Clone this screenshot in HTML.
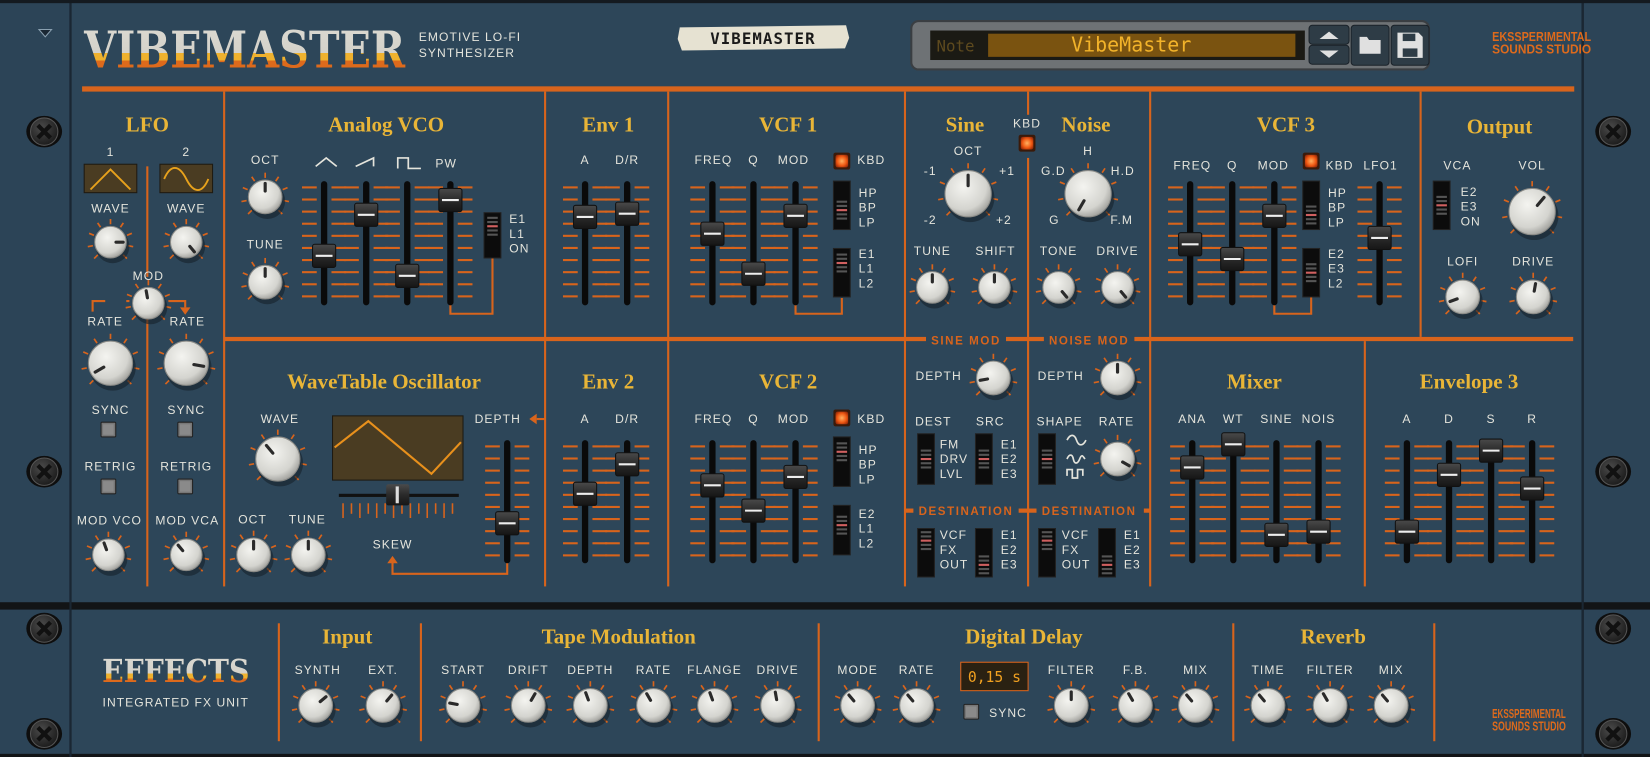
<!DOCTYPE html>
<html><head><meta charset="utf-8">
<style>
html,body{margin:0;padding:0;background:#111;width:1650px;height:757px;overflow:hidden}
#w{position:absolute;left:0;top:0;width:1568px;height:719px;transform:scale(1.05230,1.05285);transform-origin:0 0}
svg{display:block}
.t{font-family:"Liberation Serif",serif;font-weight:bold;font-size:20px;fill:#e9b537;text-anchor:middle}
.l{font-family:"Liberation Sans",sans-serif;font-size:11.5px;fill:#e4e4dc;text-anchor:middle;letter-spacing:1px}
.s{font-family:"Liberation Sans",sans-serif;font-size:11.5px;fill:#e4e4dc;letter-spacing:1px}
.o{font-family:"Liberation Sans",sans-serif;font-size:11px;fill:#d8641c;text-anchor:middle;letter-spacing:1.5px;font-weight:bold}
</style></head><body>
<div id="w">
<svg id="sv" width="1568" height="719" viewBox="0 0 1568 719" xmlns="http://www.w3.org/2000/svg">
<defs>
<radialGradient id="kg" cx="40%" cy="35%" r="70%"><stop offset="0" stop-color="#f4f4f0"/><stop offset="0.7" stop-color="#d4d4cf"/><stop offset="1" stop-color="#9a9a96"/></radialGradient>
<linearGradient id="hg" x1="0" y1="0" x2="0" y2="1"><stop offset="0" stop-color="#4a4a4a"/><stop offset="0.5" stop-color="#2a2a2a"/><stop offset="1" stop-color="#161616"/></linearGradient>
<linearGradient id="logo" x1="0" y1="0" x2="0" y2="1"><stop offset="0" stop-color="#dcdad2"/><stop offset="0.55" stop-color="#d4d2ca"/><stop offset="0.55" stop-color="#efb22e"/><stop offset="0.68" stop-color="#efb22e"/><stop offset="0.68" stop-color="#dd6a1c"/><stop offset="1" stop-color="#dd6a1c"/></linearGradient>
<radialGradient id="led" cx="50%" cy="50%" r="60%"><stop offset="0" stop-color="#ffb060"/><stop offset="0.6" stop-color="#f05a14"/><stop offset="1" stop-color="#9a2a08"/></radialGradient>
<radialGradient id="sc" cx="40%" cy="35%" r="70%"><stop offset="0" stop-color="#4a4a4a"/><stop offset="1" stop-color="#1a1a1a"/></radialGradient>
</defs>
<rect x="0" y="0" width="1568" height="719" fill="#121416"/>
<rect x="0" y="0" width="66" height="572" fill="#2c4457"/>
<rect x="1505" y="0" width="63" height="572" fill="#2c4457"/>
<rect x="68" y="0" width="1435" height="572" fill="#2d4659"/>
<rect x="0" y="579" width="66" height="137" fill="#2c4457"/>
<rect x="1505" y="579" width="63" height="137" fill="#2c4457"/>
<rect x="68" y="579" width="1435" height="137" fill="#2d4659"/>
<rect x="66" y="0" width="2" height="719" fill="#1a2733"/>
<rect x="1503" y="0" width="2" height="719" fill="#1a2733"/>
<rect x="0" y="0" width="1568" height="3" fill="#141a20"/>
<polygon points="37,28 49,28 43,35" fill="#1a2733" stroke="#8aa0b0" stroke-width="1"/>

<text x="80" y="64" font-family="DejaVu Serif,serif" font-weight="bold" font-size="48" fill="url(#logo)" textLength="305" lengthAdjust="spacingAndGlyphs">VIBEMASTER</text>
<text class="s" x="398" y="39">EMOTIVE LO-FI</text>
<text class="s" x="398" y="54">SYNTHESIZER</text>
<polygon points="646,26 804,24 807,36 803,46 648,48 644,37" fill="#e6e2d2"/>
<text x="725" y="42" font-family="DejaVu Sans Mono,monospace" font-weight="bold" font-size="15" fill="#1a1a1a" text-anchor="middle" letter-spacing="1">VIBEMASTER</text>
<rect x="866" y="20" width="492" height="46" rx="7" fill="#6e7275" stroke="#3a3e42" stroke-width="2"/>
<rect x="884" y="29" width="356" height="28" fill="#1b1a14"/>
<text x="890" y="49" font-family="DejaVu Sans Mono,monospace" font-size="15" fill="#5e4a1e">Note</text>
<rect x="939" y="32" width="292" height="22" fill="#7a5310"/>
<text x="1075" y="49" font-family="DejaVu Sans Mono,monospace" font-size="19" fill="#f2b32a" text-anchor="middle">VibeMaster</text>
<rect x="1244" y="24" width="38" height="18" rx="3" fill="#2e3c46" stroke="#1a2229"/>
<rect x="1244" y="43" width="38" height="18" rx="3" fill="#2e3c46" stroke="#1a2229"/>
<polygon points="1254,37 1263,30 1272,37" fill="#e0e0e0"/>
<polygon points="1254,48 1263,55 1272,48" fill="#e0e0e0"/>
<rect x="1284" y="24" width="36" height="38" rx="3" fill="#2e3c46" stroke="#1a2229"/>
<path d="M1292 35 h7 l2 3 h11 v13 h-20z" fill="#e0e0e0"/>
<rect x="1322" y="24" width="36" height="38" rx="3" fill="#2e3c46" stroke="#1a2229"/>
<path d="M1328 31 h20 l4 4 v20 h-24z" fill="#e0e0e0"/><rect x="1333" y="32" width="12" height="7" fill="#2e3c46"/><rect x="1333" y="46" width="14" height="8" fill="#2e3c46"/>
<text x="1418" y="39" font-family="Liberation Sans,sans-serif" font-weight="bold" font-size="12" fill="#dd6a1c" textLength="94" lengthAdjust="spacingAndGlyphs">EKSSPERIMENTAL</text>
<text x="1418" y="51" font-family="Liberation Sans,sans-serif" font-weight="bold" font-size="12" fill="#dd6a1c" textLength="94" lengthAdjust="spacingAndGlyphs">SOUNDS STUDIO</text>

<g fill="#d8641c">
<rect x="78" y="82" width="1418" height="5"/>
<rect x="213" y="320" width="1282" height="4"/>
<rect x="212" y="87" width="2" height="470"/>
<rect x="139" y="158" width="2" height="105"/>
<rect x="139" y="300" width="2" height="257"/>
<rect x="517" y="87" width="2" height="470"/>
<rect x="634" y="87" width="2" height="470"/>
<rect x="859" y="87" width="2" height="470"/>
<rect x="976" y="87" width="2" height="22"/><rect x="976" y="150" width="2" height="407"/>
<rect x="1092" y="87" width="2" height="470"/>
<rect x="1349" y="87" width="2" height="233"/>
<rect x="1296" y="324" width="2" height="233"/>
<rect x="264" y="592" width="2" height="112"/>
<rect x="399" y="592" width="2" height="112"/>
<rect x="777" y="592" width="2" height="112"/>
<rect x="1171" y="592" width="2" height="112"/>
<rect x="1362" y="592" width="2" height="112"/>
<rect x="860" y="483" width="233" height="4"/>
</g>
<rect x="880" y="316" width="76" height="12" fill="#2d4659"/>
<rect x="992" y="316" width="86" height="12" fill="#2d4659"/>
<rect x="868" y="479" width="100" height="12" fill="#2d4659"/>
<rect x="985" y="479" width="102" height="12" fill="#2d4659"/>
<text class="o" x="918" y="327">SINE MOD</text>
<text class="o" x="1035" y="327">NOISE MOD</text>
<text class="o" x="918" y="489">DESTINATION</text>
<text class="o" x="1035" y="489">DESTINATION</text>

<g fill="none" stroke="#d8641c" stroke-width="2">
<path d="M428 285 V298 H468 V245"/>
<path d="M756 285 V298 H800 V283"/>
<path d="M1211 285 V298 H1246 V280"/>
<path d="M100 286 H88 V296 M120 286 H123"/>
<path d="M160 286 H176 V292"/>
<path d="M482 528 V545 H373 V533"/>
<path d="M518 398 H510"/>
</g>
<polygon points="171,292 181,292 176,299" fill="#d8641c"/>
<polygon points="368,535 378,535 373,528" fill="#d8641c"/>
<polygon points="510,393 510,403 503,398" fill="#d8641c"/>

<text class="t" x="140" y="125">LFO</text>
<text class="t" x="367" y="125">Analog VCO</text>
<text class="t" x="578" y="125">Env 1</text>
<text class="t" x="749" y="125">VCF 1</text>
<text class="t" x="917" y="125">Sine</text>
<text class="t" x="1032" y="125">Noise</text>
<text class="t" x="1222" y="125">VCF 3</text>
<text class="t" x="1425" y="127">Output</text>
<text class="t" x="365" y="369">WaveTable Oscillator</text>
<text class="t" x="578" y="369">Env 2</text>
<text class="t" x="749" y="369">VCF 2</text>
<text class="t" x="1192" y="369">Mixer</text>
<text class="t" x="1396" y="369">Envelope 3</text>
<text class="t" x="330" y="611">Input</text>
<text class="t" x="588" y="611">Tape Modulation</text>
<text class="t" x="973" y="611">Digital Delay</text>
<text class="t" x="1267" y="611">Reverb</text>

<g>
<text class="l" x="105" y="148">1</text><text class="l" x="177" y="148">2</text>
<text class="l" x="105" y="202">WAVE</text><text class="l" x="177" y="202">WAVE</text>
<text class="l" x="141" y="266">MOD</text>
<text class="l" x="100" y="309">RATE</text><text class="l" x="178" y="309">RATE</text>
<text class="l" x="105" y="393">SYNC</text><text class="l" x="177" y="393">SYNC</text>
<text class="l" x="105" y="447">RETRIG</text><text class="l" x="177" y="447">RETRIG</text>
<text class="l" x="104" y="498">MOD VCO</text><text class="l" x="178" y="498">MOD VCA</text>
<text class="l" x="252" y="156">OCT</text><text class="l" x="252" y="236">TUNE</text>
<text class="l" x="424" y="159">PW</text>
<text class="s" x="484" y="212">E1</text><text class="s" x="484" y="226">L1</text><text class="s" x="484" y="240">ON</text>
<text class="l" x="556" y="156">A</text><text class="l" x="596" y="156">D/R</text>
<text class="l" x="678" y="156">FREQ</text><text class="l" x="716" y="156">Q</text><text class="l" x="754" y="156">MOD</text><text class="l" x="828" y="156">KBD</text>
<text class="s" x="816" y="187">HP</text><text class="s" x="816" y="201">BP</text><text class="s" x="816" y="215">LP</text>
<text class="s" x="816" y="245">E1</text><text class="s" x="816" y="259">L1</text><text class="s" x="816" y="273">L2</text>
<text class="l" x="976" y="121" font-size="10">KBD</text>
<text class="l" x="920" y="147">OCT</text>
<text class="l" x="884" y="166">-1</text><text class="l" x="957" y="166">+1</text><text class="l" x="884" y="213">-2</text><text class="l" x="954" y="213">+2</text>
<text class="l" x="886" y="242">TUNE</text><text class="l" x="946" y="242">SHIFT</text>
<text class="l" x="1034" y="147">H</text>
<text class="l" x="1001" y="166">G.D</text><text class="l" x="1067" y="166">H.D</text><text class="l" x="1002" y="213">G</text><text class="l" x="1066" y="213">F.M</text>
<text class="l" x="1006" y="242">TONE</text><text class="l" x="1062" y="242">DRIVE</text>
<text class="l" x="1133" y="161">FREQ</text><text class="l" x="1171" y="161">Q</text><text class="l" x="1210" y="161">MOD</text><text class="l" x="1273" y="161">KBD</text><text class="l" x="1312" y="161">LFO1</text>
<text class="s" x="1262" y="187">HP</text><text class="s" x="1262" y="201">BP</text><text class="s" x="1262" y="215">LP</text>
<text class="s" x="1262" y="245">E2</text><text class="s" x="1262" y="259">E3</text><text class="s" x="1262" y="273">L2</text>
<text class="l" x="1385" y="161">VCA</text><text class="l" x="1456" y="161">VOL</text>
<text class="s" x="1388" y="186">E2</text><text class="s" x="1388" y="200">E3</text><text class="s" x="1388" y="214">ON</text>
<text class="l" x="1390" y="252">LOFI</text><text class="l" x="1457" y="252">DRIVE</text>
<text class="l" x="266" y="402">WAVE</text><text class="l" x="473" y="402">DEPTH</text>
<text class="l" x="373" y="521">SKEW</text>
<text class="l" x="240" y="497">OCT</text><text class="l" x="292" y="497">TUNE</text>
<text class="l" x="556" y="402">A</text><text class="l" x="596" y="402">D/R</text>
<text class="l" x="678" y="402">FREQ</text><text class="l" x="716" y="402">Q</text><text class="l" x="754" y="402">MOD</text><text class="l" x="828" y="402">KBD</text>
<text class="s" x="816" y="431">HP</text><text class="s" x="816" y="445">BP</text><text class="s" x="816" y="459">LP</text>
<text class="s" x="816" y="492">E2</text><text class="s" x="816" y="506">L1</text><text class="s" x="816" y="520">L2</text>
<text class="l" x="892" y="361">DEPTH</text><text class="l" x="1008" y="361">DEPTH</text>
<text class="l" x="887" y="404">DEST</text><text class="l" x="941" y="404">SRC</text>
<text class="s" x="893" y="426">FM</text><text class="s" x="893" y="440">DRV</text><text class="s" x="893" y="454">LVL</text>
<text class="s" x="951" y="426">E1</text><text class="s" x="951" y="440">E2</text><text class="s" x="951" y="454">E3</text>
<text class="l" x="1007" y="404">SHAPE</text><text class="l" x="1061" y="404">RATE</text>
<text class="s" x="893" y="512">VCF</text><text class="s" x="893" y="526">FX</text><text class="s" x="893" y="540">OUT</text>
<text class="s" x="951" y="512">E1</text><text class="s" x="951" y="526">E2</text><text class="s" x="951" y="540">E3</text>
<text class="s" x="1009" y="512">VCF</text><text class="s" x="1009" y="526">FX</text><text class="s" x="1009" y="540">OUT</text>
<text class="s" x="1068" y="512">E1</text><text class="s" x="1068" y="526">E2</text><text class="s" x="1068" y="540">E3</text>
<text class="l" x="1133" y="402">ANA</text><text class="l" x="1172" y="402">WT</text><text class="l" x="1213" y="402">SINE</text><text class="l" x="1253" y="402">NOIS</text>
<text class="l" x="1337" y="402">A</text><text class="l" x="1377" y="402">D</text><text class="l" x="1417" y="402">S</text><text class="l" x="1456" y="402">R</text>
<text class="l" x="302" y="640">SYNTH</text><text class="l" x="364" y="640">EXT.</text>
<text class="l" x="440" y="640">START</text><text class="l" x="502" y="640">DRIFT</text><text class="l" x="561" y="640">DEPTH</text><text class="l" x="621" y="640">RATE</text><text class="l" x="679" y="640">FLANGE</text><text class="l" x="739" y="640">DRIVE</text>
<text class="l" x="815" y="640">MODE</text><text class="l" x="871" y="640">RATE</text>
<text class="l" x="1018" y="640">FILTER</text><text class="l" x="1079" y="640">F.B.</text><text class="l" x="1136" y="640">MIX</text>
<text class="l" x="1205" y="640">TIME</text><text class="l" x="1264" y="640">FILTER</text><text class="l" x="1322" y="640">MIX</text>
<text class="s" x="940" y="681">SYNC</text>
<text class="l" x="167" y="671" font-size="10.5" letter-spacing="2">INTEGRATED FX UNIT</text>
</g>
<text x="97" y="648" font-family="DejaVu Serif,serif" font-weight="bold" font-size="30" fill="url(#logo)" textLength="140" lengthAdjust="spacingAndGlyphs">EFFECTS</text>
<text x="1418" y="682" font-family="Liberation Sans,sans-serif" font-weight="bold" font-size="12" fill="#dd6a1c" textLength="70" lengthAdjust="spacingAndGlyphs">EKSSPERIMENTAL</text>
<text x="1418" y="694" font-family="Liberation Sans,sans-serif" font-weight="bold" font-size="12" fill="#dd6a1c" textLength="70" lengthAdjust="spacingAndGlyphs">SOUNDS STUDIO</text>

<rect x="80" y="156" width="50" height="27" fill="#4a3c22" stroke="#1e1a12"/>
<polyline points="86,180 105,161 124,180" fill="none" stroke="#e8a21c" stroke-width="1.8"/>
<rect x="152" y="156" width="50" height="27" fill="#4a3c22" stroke="#1e1a12"/>
<path d="M156 170 C162 156,170 156,177 170 S192 184,198 170" fill="none" stroke="#e8a21c" stroke-width="1.8"/>
<g fill="none" stroke="#e4e4dc" stroke-width="1.6">
<path d="M300 158 L310 150 L320 158"/><path d="M338 158 L355 150 V158"/><path d="M378 160 V150 H388 V160 H400"/>
<path d="M1014 418 c3 -6 7 -6 9 0 s6 6 9 0"/><path d="M1014 436 c2 -5 5 -5 6 0 s4 5 6 0 s3 -3 5 0"/><path d="M1014 452 v-6 h5 v8 h5 v-8 h5 v6"/>
</g>
<rect x="316" y="395" width="124" height="61" fill="#4a3c22" stroke="#1e1a12"/>
<polyline points="318,425 350,400 410,450 438,420" fill="none" stroke="#e8901c" stroke-width="2"/>
<rect x="322" y="469" width="114" height="3" fill="#111"/>
<g stroke="#d8641c" stroke-width="1.5" id="skt"></g>
<rect x="367" y="460" width="22" height="20" rx="2" fill="url(#hg)"/><rect x="376" y="462" width="3" height="16" fill="#ddd"/>
<rect x="913" y="629" width="64" height="27" fill="#2a2112" stroke="#d8641c" stroke-width="1"/>
<text x="945" y="648" font-family="DejaVu Sans Mono,monospace" font-size="14" fill="#f0a020" text-anchor="middle">0,15 s</text>
<g id="dyn"></g>
</svg>
</div>
<script>
var g=document.getElementById('dyn'),h='';
function knob(x,y,r,a){
 for(var i=0;i<9;i++){var t=(-135+i*33.75)*Math.PI/180;h+='<line x1="'+(x+Math.sin(t)*(r+2))+'" y1="'+(y-Math.cos(t)*(r+2))+'" x2="'+(x+Math.sin(t)*(r+7))+'" y2="'+(y-Math.cos(t)*(r+7))+'" stroke="#d8641c" stroke-width="1.6"/>';}
 h+='<circle cx="'+(x+2)+'" cy="'+(y+4)+'" r="'+(r+1)+'" fill="#16222c" opacity="0.6"/>';
 h+='<circle cx="'+x+'" cy="'+y+'" r="'+r+'" fill="url(#kg)" stroke="#8a8a86" stroke-width="1"/>';
 var t=a*Math.PI/180;h+='<line x1="'+(x+Math.sin(t)*r*0.35)+'" y1="'+(y-Math.cos(t)*r*0.35)+'" x2="'+(x+Math.sin(t)*r*0.8)+'" y2="'+(y-Math.cos(t)*r*0.8)+'" stroke="#2a2a2a" stroke-width="3" stroke-linecap="round"/>';
}
function fad(x,y1,y2,hy){
 for(var y=y1+6;y<y2-4;y+=11.5){h+='<line x1="'+(x-21)+'" y1="'+y+'" x2="'+(x-7)+'" y2="'+y+'" stroke="#d8641c" stroke-width="2"/><line x1="'+(x+7)+'" y1="'+y+'" x2="'+(x+21)+'" y2="'+y+'" stroke="#d8641c" stroke-width="2"/>';}
 h+='<rect x="'+(x-3)+'" y="'+y1+'" width="6" height="'+(y2-y1)+'" rx="3" fill="#0a0a0a"/>';
 h+='<rect x="'+(x-11)+'" y="'+(hy-11)+'" width="22" height="22" rx="2" fill="url(#hg)" stroke="#111"/>';
 h+='<line x1="'+(x-8)+'" y1="'+hy+'" x2="'+(x+8)+'" y2="'+hy+'" stroke="#eee" stroke-width="2"/>';
}
function sw(x,y1,y2,p){
 h+='<rect x="'+(x-8)+'" y="'+y1+'" width="16" height="'+(y2-y1)+'" fill="#0c0c0c" stroke="#222"/>';
 var c=y1+(y2-y1)*p;
 for(var i=-2;i<=2;i++){h+='<rect x="'+(x-5)+'" y="'+(c+i*4-1)+'" width="10" height="2" fill="'+(i==0?'#d06060':'#555')+'"/>';}
}
function led(x,y){h+='<rect x="'+(x-8)+'" y="'+(y-8)+'" width="16" height="16" rx="2" fill="#3a1a0a"/><rect x="'+(x-6)+'" y="'+(y-6)+'" width="12" height="12" rx="2" fill="url(#led)"/>';}
function btn(x,y){h+='<rect x="'+(x-7)+'" y="'+(y-7)+'" width="14" height="14" rx="1" fill="#777" stroke="#222"/><rect x="'+(x-5)+'" y="'+(y-5)+'" width="10" height="10" fill="#8a8a8a"/>';}
function screw(x,y){h+='<ellipse cx="'+x+'" cy="'+y+'" rx="17" ry="15" fill="#0e0e0e"/><circle cx="'+x+'" cy="'+y+'" r="13" fill="url(#sc)" stroke="#555"/><path d="M'+(x-6)+' '+(y-6)+' L'+(x+6)+' '+(y+6)+' M'+(x+6)+' '+(y-6)+' L'+(x-6)+' '+(y+6)+'" stroke="#111" stroke-width="4"/>';}
[[42,125],[42,448],[42,597],[42,697],[1533,125],[1533,448],[1533,597],[1533,697]].forEach(function(p){screw(p[0],p[1]);});
knob(105,230,15,90);knob(177,230,15,140);knob(141,288,15,-10);
knob(105,345,21,-120);knob(177,345,21,100);
btn(103,408);btn(176,408);btn(103,462);btn(176,462);
knob(103,527,15,-20);knob(177,527,15,-40);
knob(252,187,16,0);knob(252,268,16,0);
fad(308,172,290,243);fad(348,172,290,204);fad(387,172,290,262);fad(428,172,290,190);
sw(468,202,245,0.3);
fad(556,172,290,206);fad(596,172,290,203);
fad(677,172,290,222);fad(716,172,290,260);fad(756,172,290,205);
led(800,153);sw(800,172,218,0.6);sw(800,236,282,0.3);
led(976,136);knob(920,184,22,0);knob(1034,184,22,-150);
knob(886,273,15,0);knob(945,273,15,0);knob(1006,273,15,140);knob(1062,273,15,140);
fad(1131,172,290,232);fad(1171,172,290,246);fad(1211,172,290,205);fad(1311,172,290,226);
led(1246,153);sw(1246,172,218,0.7);sw(1246,236,282,0.5);
sw(1370,172,218,0.5);knob(1456,201,22,40);knob(1390,282,16,-110);knob(1457,282,16,10);
knob(264,436,21,-40);knob(241,527,16,0);knob(293,527,16,0);
fad(482,418,535,497);
fad(556,418,535,469);fad(596,418,535,441);
fad(677,418,535,461);fad(716,418,535,485);fad(756,418,535,453);
led(800,397);sw(800,415,462,0.3);sw(800,480,527,0.4);
knob(944,359,16,-100);knob(1062,359,16,0);knob(1062,436,16,120);
sw(880,412,460,0.5);sw(935,412,460,0.5);sw(995,412,460,0.5);
sw(880,502,548,0.25);sw(935,502,548,0.75);sw(995,502,548,0.25);sw(1052,502,548,0.75);
fad(1133,418,535,444);fad(1172,418,535,422);fad(1213,418,535,508);fad(1253,418,535,505);
fad(1337,418,535,505);fad(1377,418,535,451);fad(1417,418,535,428);fad(1456,418,535,464);
[[300,50],[364,40],[440,-80],[502,30],[561,-20],[621,-30],[679,-20],[739,-10],[815,-40],[871,-40],[1018,0],[1079,-30],[1136,-40],[1205,-40],[1264,-30],[1322,-40]].forEach(function(p){knob(p[0],670,16,p[1]);});
btn(923,676);
g.innerHTML=h;
var s='';for(var x=326;x<=434;x+=8){s+='<line x1="'+x+'" y1="478" x2="'+x+'" y2="'+(x%16==6?492:488)+'"/>';}
document.getElementById('skt').innerHTML=s;
</script>
</body></html>
